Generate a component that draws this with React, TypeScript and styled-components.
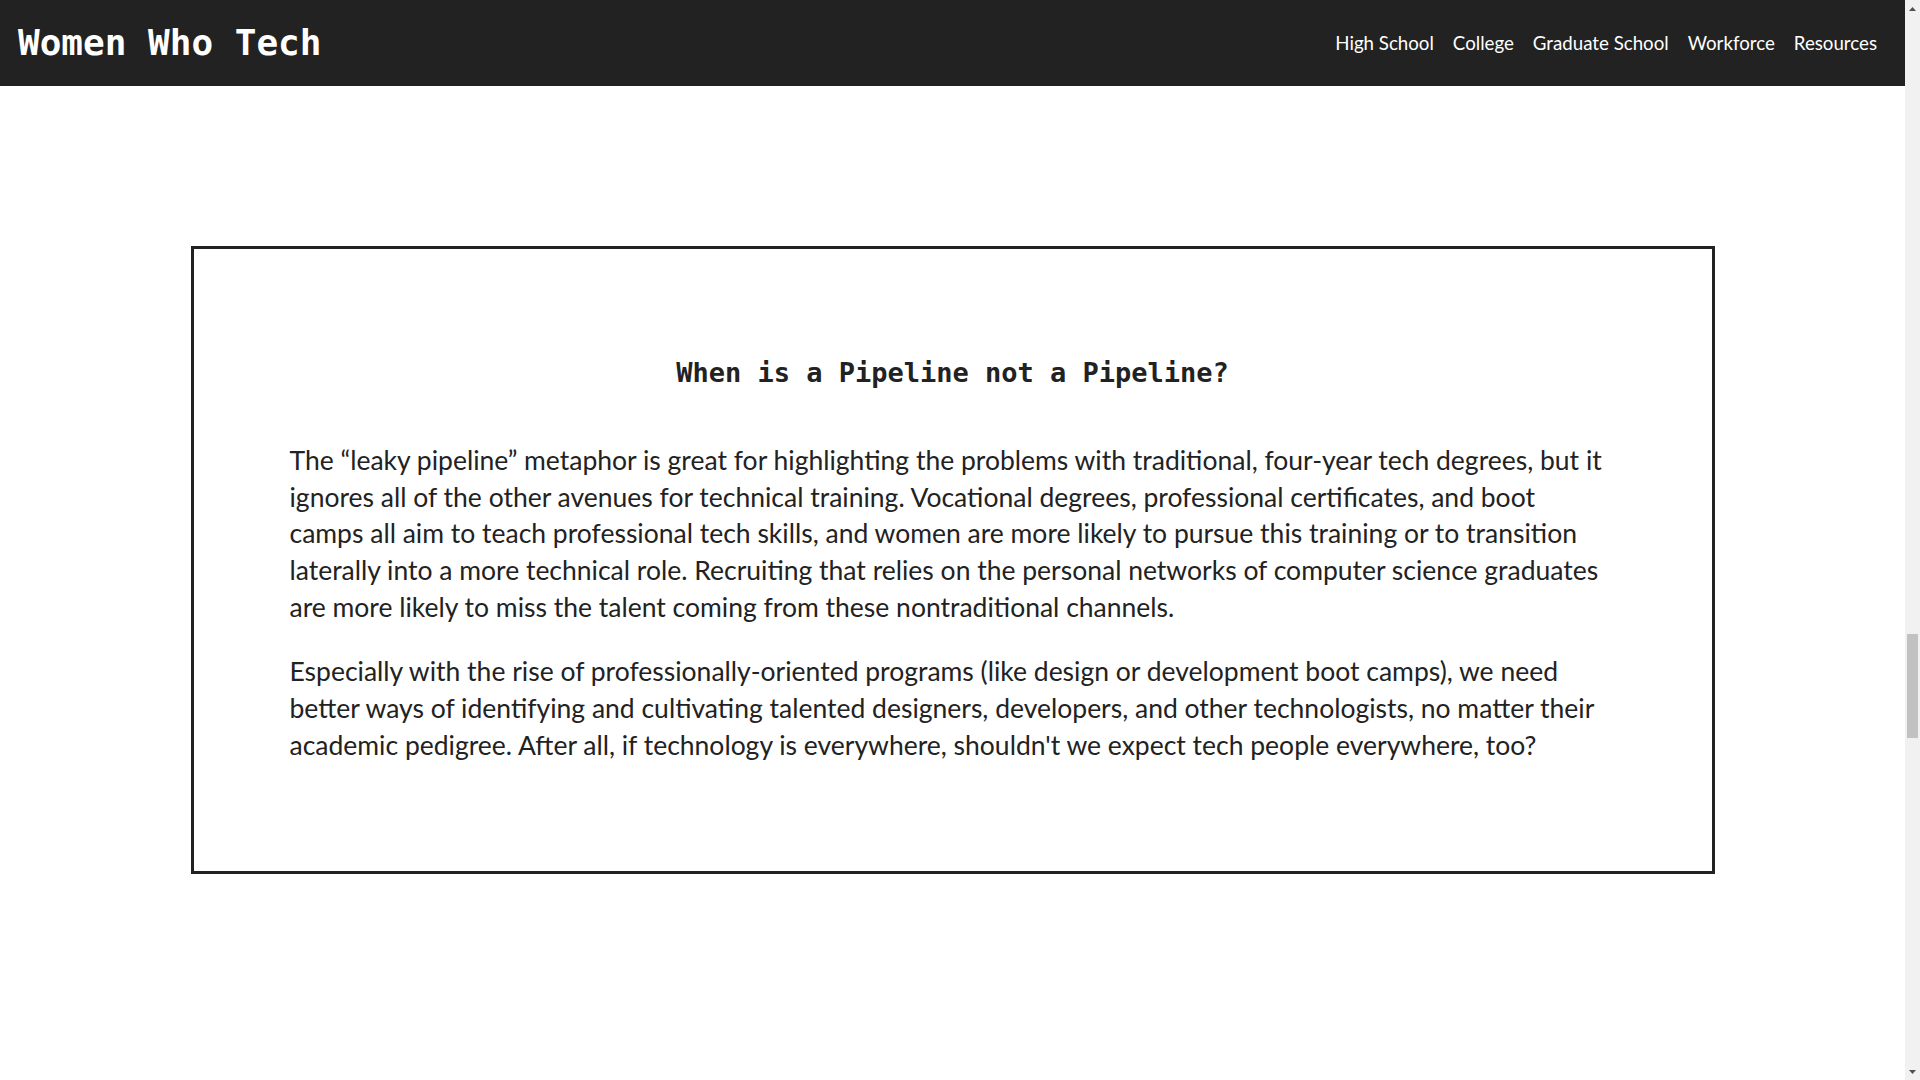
import React from "react";
import styled, { createGlobalStyle } from "styled-components";

const GlobalStyle = createGlobalStyle`
  html, body {
    margin: 0;
    height: 100%;
    overflow: hidden;
  }
  body {
    background: #ffffff;
    color: #222222;
    font-family: Lato, "Open Sans", sans-serif;
  }
`;

const Viewport = styled.div`
  display: flex;
  height: 100vh;
`;

const Page = styled.div`
  flex: 1;
  min-width: 0;
`;

const ScrollTrack = styled.div`
  width: 15px;
  flex: none;
  background: #f1f1f1;
  display: flex;
  flex-direction: column;
  align-items: center;
`;

const ScrollArrow = styled.div`
  height: 17px;
  width: 15px;
  display: flex;
  align-items: center;
  justify-content: center;
  flex: none;
`;

const ScrollSpacer = styled.div<{ $grow: number }>`
  flex: ${(p) => p.$grow};
`;

const ScrollThumb = styled.div`
  width: 11px;
  height: 104px;
  flex: none;
  background: #c1c1c1;
`;

const Header = styled.header`
  height: 86px;
  background: #222222;
  display: flex;
  align-items: center;
  justify-content: space-between;
  padding: 0 28px 0 18px;
  box-sizing: border-box;
`;

const Logo = styled.h1`
  margin: 0;
  font-family: "DejaVu Sans Mono", monospace;
  font-weight: bold;
  font-size: 36px;
  line-height: 42px;
  color: #ffffff;
`;

const Nav = styled.nav`
  display: flex;
  align-items: center;
  gap: 19px;
`;

const NavLink = styled.a`
  font-family: Lato, sans-serif;
  font-size: 18.7px;
  color: #ffffff;
  text-decoration: none;
  cursor: pointer;
`;

const Section = styled.section`
  padding: 160px 0 200px;
`;

const Card = styled.article`
  width: 80%;
  margin: 0 auto;
  border: 3px solid #222222;
  padding: 108px 96px 108px;
  box-sizing: border-box;
`;

const Title = styled.h2`
  margin: 0 0 53px;
  text-align: center;
  font-family: "DejaVu Sans Mono", monospace;
  font-weight: bold;
  font-size: 27px;
  line-height: 32px;
  color: #222222;
`;

const Paragraph = styled.p`
  margin: 0 0 27.6px;
  font-family: Lato, sans-serif;
  font-size: 26.5px;
  line-height: 36.7px;
  color: #222222;

  &:last-child {
    margin-bottom: 0;
  }
`;

const links = ["High School", "College", "Graduate School", "Workforce", "Resources"];

function Arrow({ down }: { down?: boolean }) {
  return (
    <ScrollArrow>
      <svg width="7" height="4" viewBox="0 0 7 4">
        <path d={down ? "M0 0h7L3.5 4z" : "M0 4h7L3.5 0z"} fill="#505050" />
      </svg>
    </ScrollArrow>
  );
}

export default function App() {
  return (
    <>
      <GlobalStyle />
      <Viewport>
        <Page>
          <Header>
            <Logo>Women Who Tech</Logo>
            <Nav>
              {links.map((l) => (
                <NavLink key={l}>{l}</NavLink>
              ))}
            </Nav>
          </Header>
          <Section>
            <Card>
              <Title>When is a Pipeline not a Pipeline?</Title>
              <Paragraph>
                The “leaky pipeline” metaphor is great for highlighting the problems with traditional,
                four-year tech degrees, but it ignores all of the other avenues for technical training.
                Vocational degrees, professional certificates, and boot camps all aim to teach
                professional tech skills, and women are more likely to pursue this training or to
                transition laterally into a more technical role. Recruiting that relies on the personal
                networks of computer science graduates are more likely to miss the talent coming from
                these nontraditional channels.
              </Paragraph>
              <Paragraph>
                Especially with the rise of professionally-oriented programs (like design or development
                boot camps), we need better ways of identifying and cultivating talented designers,
                developers, and other technologists, no matter their academic pedigree. After all, if
                technology is everywhere, shouldn't we expect tech people everywhere, too?
              </Paragraph>
            </Card>
          </Section>
        </Page>
        <ScrollTrack>
          <Arrow />
          <ScrollSpacer $grow={617} />
          <ScrollThumb />
          <ScrollSpacer $grow={325} />
          <Arrow down />
        </ScrollTrack>
      </Viewport>
    </>
  );
}
